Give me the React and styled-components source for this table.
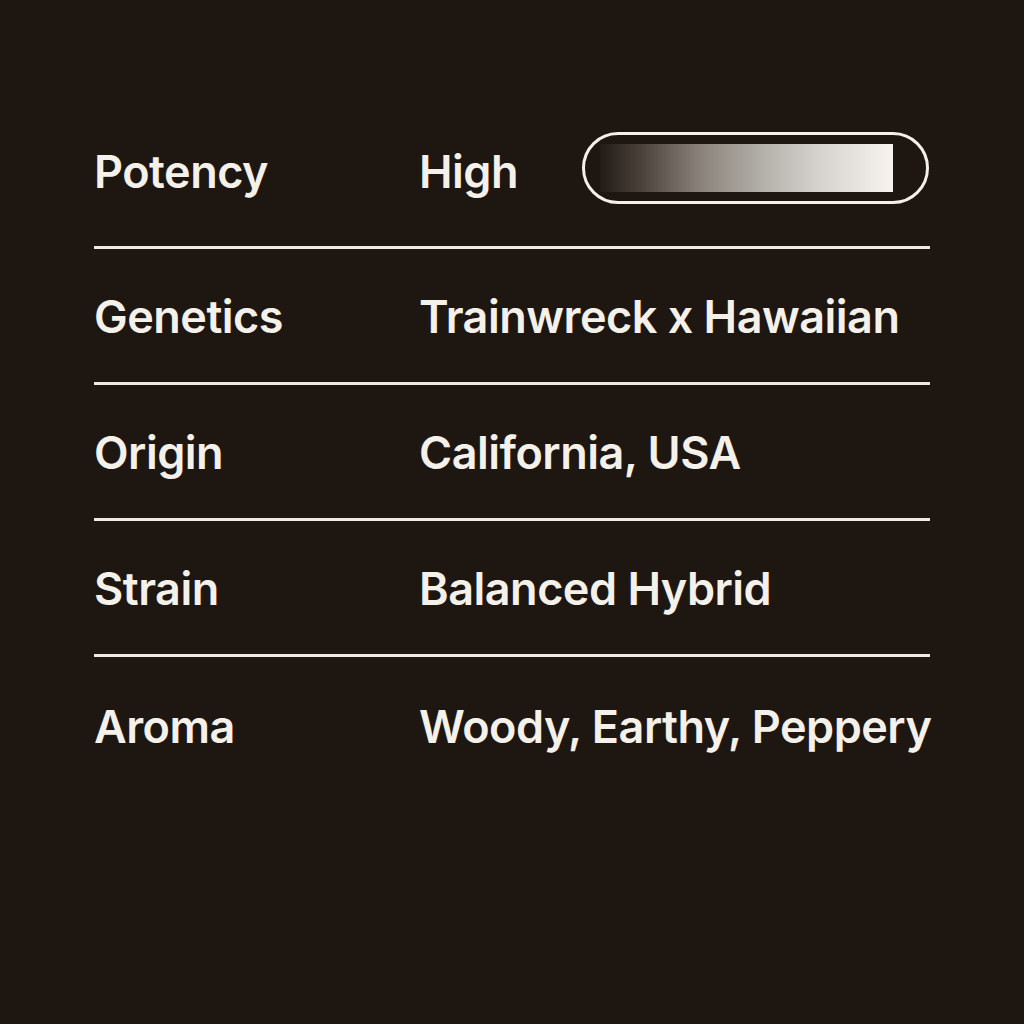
import React from "react";
import styled, { createGlobalStyle } from "styled-components";

const GlobalStyle = createGlobalStyle`
  html, body {
    margin: 0;
    padding: 0;
    background: #1d1611;
  }
  body {
    font-family: Inter, "Noto Sans", sans-serif;
  }
`;

const specs = [
  { label: "Potency", value: "High", meter: true },
  { label: "Genetics", value: "Trainwreck x Hawaiian" },
  { label: "Origin", value: "California, USA" },
  { label: "Strain", value: "Balanced Hybrid" },
  { label: "Aroma", value: "Woody, Earthy, Peppery" },
];

const App = () => {
  return (
    <>
      <GlobalStyle />
      <Page>
        <SpecList>
          {specs.map((s, i) => (
            <SpecRow key={s.label} $first={i === 0} $last={i === specs.length - 1}>
              <Label>{s.label}</Label>
              <Value>
                <span>{s.value}</span>
                {s.meter && (
                  <Meter>
                    <MeterFill />
                  </Meter>
                )}
              </Value>
            </SpecRow>
          ))}
        </SpecList>
      </Page>
    </>
  );
};

const Page = styled.div`
  width: 1024px;
  height: 1024px;
  box-sizing: border-box;
  background: #1d1611;
  padding: 112px 94px 0 94px;
`;

const SpecList = styled.div`
  display: flex;
  flex-direction: column;
`;

const SpecRow = styled.div`
  display: grid;
  grid-template-columns: 325px 1fr;
  align-items: center;
  height: ${(p) => (p.$first ? "137px" : "136px")};
  padding: ${(p) => (p.$first ? "0 0 16px 0" : "2px 0 0 0")};
  box-sizing: border-box;
  border-bottom: ${(p) => (p.$last ? "none" : "3px solid #efebe4")};
  color: #f4f0ea;
  font-size: 45px;
  font-weight: 600;
  letter-spacing: -0.5px;
`;

const Label = styled.div``;

const Value = styled.div`
  display: flex;
  align-items: center;
  gap: 64px;
  white-space: nowrap;
`;

const Meter = styled.div`
  width: 347px;
  height: 72px;
  margin-bottom: 6px;
  box-sizing: border-box;
  border: 3px solid #f4f0ea;
  border-radius: 36px;
  padding: 9px 33px 9px 15px;
  display: flex;
`;

const MeterFill = styled.div`
  flex: 1;
  background: linear-gradient(
    to right,
    #221b16 0%,
    #4a413a 14%,
    #8a827a 34%,
    #b3afa9 55%,
    #d6d3ce 75%,
    #f7f4ef 100%
  );
`;

export default App;
